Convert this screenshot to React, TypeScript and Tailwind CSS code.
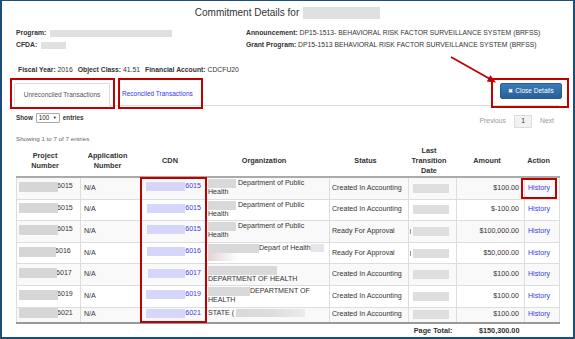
import React from "react";

type Row = {
  pw: number;
  p: string;
  cw: number;
  c: string;
  org: React.ReactNode;
  status: string;
  tick?: boolean;
  amount: string;
};

const box = "inline-block bg-[#d9d9d9]";

const deptPublic = (
  <>
    <span className={`${box} w-[28px] h-[9px] align-top`} /> Department of Public
    <br />
    Health
  </>
);

const rows: Row[] = [
  { pw: 39, p: "6015", cw: 39, c: "6015", org: deptPublic, status: "Created In Accounting", amount: "$100.00" },
  { pw: 39, p: "6015", cw: 38, c: "6015", org: deptPublic, status: "Created In Accounting", amount: "$-100.00" },
  { pw: 39, p: "6015", cw: 38, c: "6015", org: deptPublic, status: "Ready For Approval", tick: true, amount: "$100,000.00" },
  {
    pw: 37,
    p: "6016",
    cw: 38,
    c: "6016",
    org: (
      <>
        <span className={`${box} w-[51px] h-[9px] align-top`} />
        Depart of Health
        <span className="inline-block w-[13px] h-[8px] bg-[#e6e6e6] align-top" />
        <br />
        <span className="inline-block w-[30px] h-[8px] bg-gradient-to-r from-[#e2d4d4] to-white align-top" />
      </>
    ),
    status: "Ready For Approval",
    tick: true,
    amount: "$50,000.00",
  },
  {
    pw: 38,
    p: "6017",
    cw: 37,
    c: "6017",
    org: (
      <>
        <span className={`${box} w-[69px] h-[9px] align-top`} />
        <br />
        DEPARTMENT OF HEALTH
      </>
    ),
    status: "Created In Accounting",
    amount: "$100.00",
  },
  {
    pw: 39,
    p: "6019",
    cw: 39,
    c: "6019",
    org: (
      <>
        <span className={`${box} w-[42px] h-[9px] align-top`} />
        DEPARTMENT OF
        <br />
        HEALTH
      </>
    ),
    status: "Created In Accounting",
    amount: "$100.00",
  },
  {
    pw: 39,
    p: "6021",
    cw: 39,
    c: "6021",
    org: (
      <>
        STATE ( <span className="inline-block w-[69px] h-[8px] bg-gradient-to-r from-[#d9d9d9] via-[#dcdcdc] to-[#ececec] align-top" />
      </>
    ),
    status: "Created In Accounting",
    amount: "$100.00",
  },
];

const cols = [64, 61, 64, 124, 79, 48, 68, 35];

export default function App() {
  return (
    <div className="relative w-[575px] h-[339px] overflow-hidden bg-white border-x-2 border-b-2 border-t border-[#1b4e7a] font-['Liberation_Sans',Arial,sans-serif] text-[#333]">
      <div className="pl-[14px] pr-[14px]">
        {/* Title */}
        <div className="pt-[5px]">
          <div className="h-[13px] flex items-center justify-center gap-[4px] text-[10px]">
            <span>Commitment Details for</span>
            <span className="inline-block w-[77px] h-[12px] bg-[#e0e0e0]" />
          </div>
        </div>

        {/* Info */}
        <div className="mt-[8px] grid grid-cols-[230px_1fr] text-[6.8px]">
          <div>
            <div className="h-[12px] flex items-center gap-[4px]">
              <span className="font-bold">Program:</span>
              <span className="inline-block w-[122px] h-[7px] bg-[#e0e0e0]" />
            </div>
            <div className="h-[12px] flex items-center gap-[4px]">
              <span className="font-bold">CFDA:</span>
              <span className="inline-block w-[25px] h-[7px] bg-[#e0e0e0]" />
            </div>
          </div>
          <div>
            <div className="h-[12px] flex items-center whitespace-nowrap">
              <span className="font-bold">Announcement:</span>&nbsp;DP15-1513- BEHAVIORAL RISK FACTOR SURVEILLANCE SYSTEM (BRFSS)
            </div>
            <div className="h-[12px] flex items-center whitespace-nowrap">
              <span className="font-bold">Grant Program:</span>&nbsp;DP15-1513 BEHAVIORAL RISK FACTOR SURVEILLANCE SYSTEM (BRFSS)
            </div>
          </div>
        </div>

        {/* Fiscal */}
        <div className="mt-[13px] h-[12px] pl-[2px] flex items-center gap-[5px] text-[6.8px] whitespace-nowrap">
          <span>
            <b>Fiscal Year:</b> 2016
          </span>
          <span>
            <b>Object Class:</b> 41.51
          </span>
          <span>
            <b>Financial Account:</b> CDCFU20
          </span>
        </div>

        {/* Tabs */}
        <div className="mt-[7px] h-[23px] flex justify-between border-b border-[#ddd]">
          <div className="flex items-end">
            <div className="-ml-[2px] -mb-px w-[96px] h-[23px] border border-[#ddd] border-b-white bg-white rounded-t-[2px] flex items-center justify-center text-[6.5px] text-[#555]">
              Unreconciled Transactions
            </div>
            <div className="ml-[12px] h-[22px] flex items-center text-[6.5px] text-[#3535e8]">Reconciled Transactions</div>
          </div>
          <button className="self-start -mr-[3px] w-[62px] h-[16px] rounded-[2px] border border-[#285e8e] bg-gradient-to-b from-[#3a7cba] to-[#2a6098] text-white text-[6.5px] flex items-center justify-center gap-[2px]">
            <span className="text-[6px]">✖</span> Close Details
          </button>
        </div>

        {/* Controls */}
        <div className="flex justify-between">
          <div>
            <div className="mt-[7px] h-[10px] flex items-center gap-[3px] text-[6.3px] font-bold">
              <span>Show</span>
              <span className="w-[24px] h-[10px] border border-[#a9a9a9] rounded-[1px] bg-white flex items-center justify-between px-[2px] font-normal text-[#222]">
                <span>100</span>
                <span className="text-[4px]">▼</span>
              </span>
              <span>entries</span>
            </div>
            <div className="mt-[11px] h-[10px] flex items-center text-[6.2px] text-[#666]">Showing 1 to 7 of 7 entries</div>
          </div>
          <div className="mt-[9px] mr-[5px] h-[13px] flex items-center gap-[8px] text-[6.8px] text-[#999]">
            <span>Previous</span>
            <span className="w-[18px] h-[13px] border border-[#ddd] bg-[#f2f2f2] text-[#333] flex items-center justify-center">1</span>
            <span>Next</span>
          </div>
        </div>

        {/* Table */}
        <table className="mt-[1px] w-[543px] table-fixed border-collapse">
          <colgroup>
            {cols.map((w, i) => (
              <col key={i} style={{ width: w }} />
            ))}
          </colgroup>
          <thead>
            <tr className="h-[32px] text-[7.3px] leading-[10px] font-bold">
              {[
                ["Project", "Number"],
                ["Application", "Number"],
                ["CDN"],
                ["Organization"],
                ["Status"],
                ["Last", "Transition", "Date"],
                ["Amount"],
                ["Action"],
              ].map((lines, i) => (
                <th key={i} className="pr-[7px] align-middle text-center border-b-2 border-[#aaa] font-bold">
                  {lines.map((l, j) => (
                    <div key={j}>{l}</div>
                  ))}
                </th>
              ))}
            </tr>
          </thead>
          <tbody className="text-[7.1px] leading-[9px]">
            {rows.map((r, i) => (
              <tr key={i} className={i % 2 === 0 ? "bg-[#f9f9f9]" : "bg-white"}>
                <td className="border border-[#ddd] pl-[2px] py-0 align-middle">
                  <span className="inline-flex items-center whitespace-nowrap">
                    <span className="relative z-10 inline-block h-[10px] bg-[#d6d6d6] -mr-[1px]" style={{ width: r.pw }} />
                    {r.p}
                  </span>
                </td>
                <td className="border border-[#ddd] pl-[3px] py-[1.3px] align-middle">N/A</td>
                <td className="border border-[#ddd] pr-[4px] py-[1.3px] align-middle text-right">
                  <span className="inline-flex items-center whitespace-nowrap text-[#3b3bdf]">
                    <span className="inline-block h-[9px] bg-[#d6d6fb]" style={{ width: r.cw }} />
                    {r.c}
                  </span>
                </td>
                <td className="border border-[#ddd] pl-[2px] py-[1.3px] align-top whitespace-nowrap">{r.org}</td>
                <td className="border border-[#ddd] pl-[2px] py-[1.3px] align-middle whitespace-nowrap">{r.status}</td>
                <td className="border border-[#ddd] pl-[1px] py-0 align-middle">
                  <span className="flex items-center">
                    <span className={`w-[1px] h-[5px] mr-[2px] ${r.tick ? "bg-[#999]" : "bg-transparent"}`} />
                    <span className="inline-block w-[36px] h-[9px] bg-[#dedede]" />
                  </span>
                </td>
                <td className="border border-[#ddd] pr-[5px] py-[1.3px] align-middle text-right whitespace-nowrap">{r.amount}</td>
                <td className="border border-[#ddd] pl-[3px] py-[1.3px] align-middle text-[#3b3bdf]">History</td>
              </tr>
            ))}
          </tbody>
          <tfoot>
            <tr className="h-[16px] text-[7.3px] font-bold">
              <td colSpan={5} className="border-t-2 border-[#999]" />
              <td className="border-t-2 border-[#999] text-right pr-[4px] whitespace-nowrap">Page Total:</td>
              <td className="border-t-2 border-[#999] text-right pr-[5px] whitespace-nowrap">$150,300.00</td>
              <td className="border-t-2 border-[#999]" />
            </tr>
          </tfoot>
        </table>
      </div>

      {/* Annotations */}
      <div className="absolute left-[8px] top-[77px] w-[105px] h-[31px] border-2 border-[#c00000]" />
      <div className="absolute left-[116px] top-[77px] w-[85px] h-[31px] border-2 border-[#c00000]" />
      <div className="absolute left-[489px] top-[77px] w-[78px] h-[30px] border-2 border-[#c00000]" />
      <div className="absolute left-[138px] top-[176px] w-[67px] h-[146px] border-2 border-[#c00000]" />
      <div className="absolute left-[519px] top-[177px] w-[36px] h-[21px] border-2 border-[#c00000]" />
      <svg className="absolute left-[440px] top-[50px]" width="60" height="40" viewBox="0 0 60 40">
        <line x1="9" y1="6" x2="48" y2="28" stroke="#c00000" strokeWidth="1.8" />
        <polygon points="54,31.5 44.8,30.6 48.4,24.2" fill="#c00000" />
      </svg>
    </div>
  );
}
